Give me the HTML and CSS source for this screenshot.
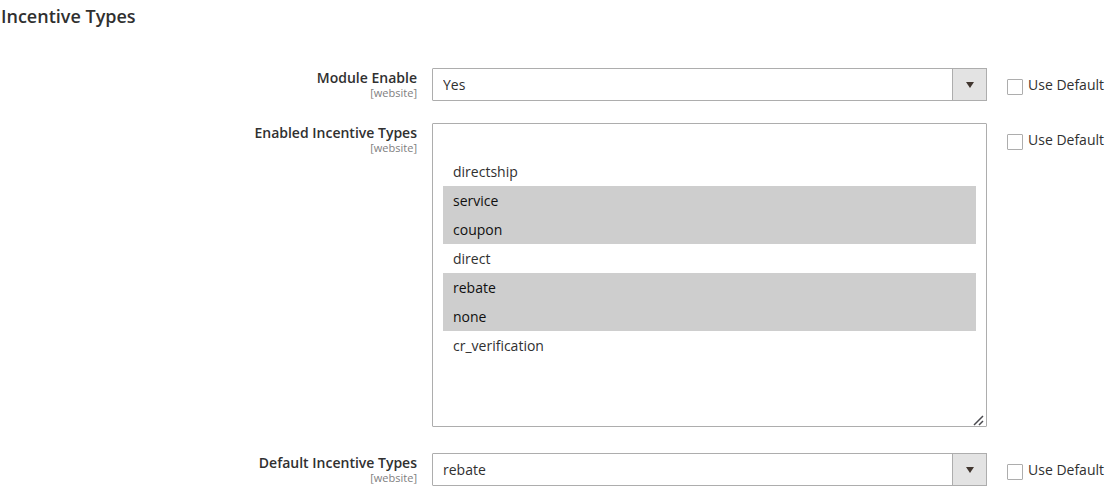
FILE: index.html
```html
<!DOCTYPE html>
<html lang="en">
<head>
<meta charset="utf-8">
<title>Incentive Types</title>
<link rel="stylesheet" href="styles.css">
</head>
<body>
<form class="config">
  <h1 class="config-title">Incentive Types</h1>
  <div class="field">
    <label class="field-label" for="module-enable">Module Enable<span class="scope">[website]</span></label>
    <div class="select-wrap">
      <select class="select" id="module-enable"><option selected>Yes</option><option>No</option></select>
      <span class="select-arrow"></span>
    </div>
    <label class="use-default"><input class="checkbox" type="checkbox">Use Default</label>
  </div>
  <div class="field field-multi">
    <label class="field-label" for="enabled-types">Enabled Incentive Types<span class="scope">[website]</span></label>
    <div class="select-wrap">
      <select class="multiselect" id="enabled-types" multiple size="10">
        <option></option>
        <option>directship</option>
        <option selected>service</option>
        <option selected>coupon</option>
        <option>direct</option>
        <option selected>rebate</option>
        <option selected>none</option>
        <option>cr_verification</option>
      </select>
      <svg class="grip" viewBox="0 0 12 12" width="12" height="12" aria-hidden="true"><path d="M1 11 10 2M6 11 10 7"/></svg>
    </div>
    <label class="use-default"><input class="checkbox" type="checkbox">Use Default</label>
  </div>
  <div class="field">
    <label class="field-label" for="default-type">Default Incentive Types<span class="scope">[website]</span></label>
    <div class="select-wrap">
      <select class="select" id="default-type"><option selected>rebate</option></select>
      <span class="select-arrow"></span>
    </div>
    <label class="use-default"><input class="checkbox" type="checkbox">Use Default</label>
  </div>
</form>
</body>
</html>
```
FILE: styles.css
```css
* { box-sizing: border-box; }
body {
  margin: 0;
  background: #fff;
  color: #303030;
  font: 14px/20px "Open Sans", "Noto Sans", sans-serif;
}
.config { padding: 4px 16px 0 1px; }
.config-title {
  margin: 0 0 40px;
  font-size: 18px;
  line-height: 24px;
  font-weight: 600;
}
.field {
  display: grid;
  grid-template-columns: 431fr 555fr 117px;
  align-items: start;
  margin-bottom: 22px;
}
.field-multi { margin-bottom: 26px; }
.field-label {
  padding-right: 15px;
  text-align: right;
  font-weight: 600;
}
.scope {
  display: block;
  color: #808080;
  font-size: 11px;
  line-height: 10px;
  font-weight: 400;
}
.select-wrap { position: relative; display: flex; }
.select, .multiselect {
  width: 100%;
  margin: 0;
  border: 1px solid #adadad;
  border-radius: 1px;
  background: #fff;
  color: #303030;
  font: inherit;
  outline: 0;
}
.select {
  appearance: none;
  height: 33px;
  padding: 1px 44px 0 10px;
}
.select-arrow {
  position: absolute;
  top: 0;
  right: 0;
  bottom: 0;
  width: 35px;
  border: 1px solid #adadad;
  background: #e3e3e3;
  pointer-events: none;
}
.select-arrow::after {
  content: "";
  position: absolute;
  top: 13px;
  left: 13px;
  border: 4px solid transparent;
  border-top: 6px solid #41362f;
  border-bottom: 0;
}
.multiselect {
  height: 304px;
  padding: 4px 10px;
  overflow: auto;
  resize: both;
}
.multiselect::-webkit-resizer { background: transparent; }
.grip {
  position: absolute;
  right: 2px;
  bottom: 1px;
  fill: none;
  stroke: #4a4a4f;
  stroke-width: 1.5;
  pointer-events: none;
}
.multiselect option {
  min-height: 29px;
  padding: 5px 10px 4px;
  line-height: 20px;
}
.use-default {
  display: flex;
  gap: 5px;
  padding: 7px 0 0 20px;
  white-space: nowrap;
}
.checkbox {
  appearance: none;
  flex: none;
  width: 16px;
  height: 16px;
  margin: 4px 0 0;
  border: 1px solid #adadad;
  border-radius: 1px;
  background: #fff;
}
```
